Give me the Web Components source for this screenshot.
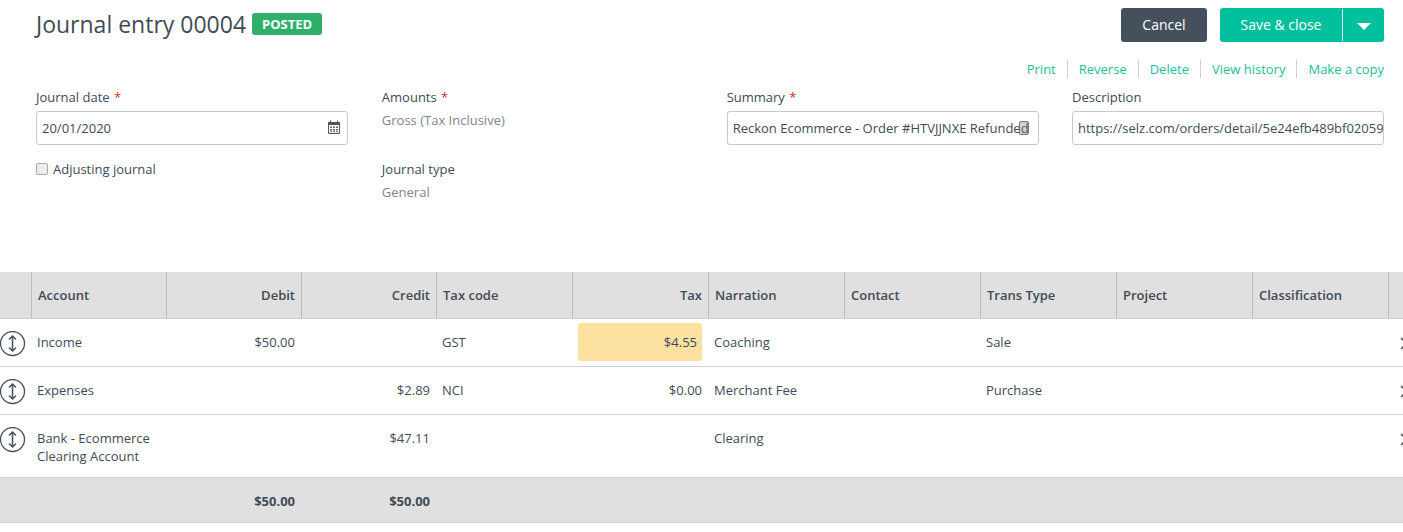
<!DOCTYPE html>
<html>
<head>
<meta charset="utf-8">
<title>Journal entry</title>
<style>
  html, body { margin: 0; background: #fff; }
  body { font: 13px/18px "Open Sans", sans-serif; color: #414b56; overflow: hidden; }
</style>
</head>
<body>
<je-page>
  <je-header slot="header" title="Journal entry 00004" status="POSTED"></je-header>
  <je-links slot="links">
    <a>Print</a><a>Reverse</a><a>Delete</a><a>View history</a><a>Make a copy</a>
  </je-links>
  <je-form slot="form"></je-form>
  <je-table slot="table"></je-table>
</je-page>

<script>
(function () {
  "use strict";

  var FONT = '"Open Sans", sans-serif';

  class JePage extends HTMLElement {
    constructor() {
      super();
      this.attachShadow({ mode: "open" }).innerHTML = `
        <style>
          :host { display: block; width: 1403px; height: 532px; overflow: hidden; }
          .top { padding: 8px 19px 0 36px; }
        </style>
        <div class="top">
          <slot name="header"></slot>
          <slot name="links"></slot>
          <slot name="form"></slot>
        </div>
        <slot name="table"></slot>`;
    }
  }
  customElements.define("je-page", JePage);

  class JeHeader extends HTMLElement {
    constructor() {
      super();
      var title = this.getAttribute("title");
      var status = this.getAttribute("status");
      this.removeAttribute("title");
      this.attachShadow({ mode: "open" }).innerHTML = `
        <style>
          :host { display: flex; justify-content: space-between; align-items: flex-start; height: 34px; font-family: ${FONT}; }
          .left { display: flex; align-items: flex-start; }
          h1 { margin: 0; font-size: 23px; line-height: 33px; font-weight: 400; color: #414b56; }
          .badge { margin: 5px 0 0 6px; height: 22px; padding: 0 10px; border-radius: 3px; background: #2fb06a; color: #fff; font-size: 13px; font-weight: 700; line-height: 22px; }
          .btns { display: flex; gap: 13px; }
          button { font: 14px/34px ${FONT}; height: 34px; border: 0; padding: 0; color: #fff; border-radius: 3px; }
          .cancel { width: 86px; background: #46505c; }
          .save { display: flex; width: 164px; background: #00c09d; }
          .save span { display: block; }
          .save .lbl { width: 122px; border-right: 1px solid #e6f8f5; height: 32px; line-height: 32px; margin-top: 1px; }
          .save .arr { flex: 1; display: flex; align-items: center; justify-content: center; padding-top: 2px; }
        </style>
        <div class="left"><h1>${title}</h1><span class="badge">${status}</span></div>
        <div class="btns">
          <button class="cancel">Cancel</button>
          <button class="save"><span class="lbl">Save &amp; close</span><span class="arr">
            <svg width="14" height="7" viewBox="0 0 14 7"><path d="M0 0h14L7 7z" fill="#fff"/></svg>
          </span></button>
        </div>`;
    }
  }
  customElements.define("je-header", JeHeader);

  class JeLinks extends HTMLElement {
    constructor() {
      super();
      this.attachShadow({ mode: "open" }).innerHTML = `
        <style>
          :host { display: flex; justify-content: flex-end; margin-top: 18px; height: 18px; font-family: ${FONT}; font-size: 13px; line-height: 18px; color: #1dbd9f; }
          ::slotted(a) { padding: 0 11px; border-left: 1px solid #cfcfcf; }
          ::slotted(a:first-child) { border-left: 0; }
          ::slotted(a:last-child) { padding-right: 0; }
        </style>
        <slot></slot>`;
    }
  }
  customElements.define("je-links", JeLinks);

  class JeField extends HTMLElement {
    constructor() {
      super();
      var label = this.getAttribute("label");
      var req = this.hasAttribute("required") ? '<i>*</i>' : "";
      this.attachShadow({ mode: "open" }).innerHTML = `
        <style>
          :host { display: block; font-family: ${FONT}; font-size: 13px; line-height: 18px; }
          .label { height: 23px; color: #414b56; }
          i { font-style: normal; color: #d8232a; margin-left: 1px; }
        </style>
        <div class="label">${label} ${req}</div>
        <slot></slot>`;
    }
  }
  customElements.define("je-field", JeField);

  class JeInput extends HTMLElement {
    constructor() {
      super();
      var value = this.getAttribute("value");
      this.attachShadow({ mode: "open" }).innerHTML = `
        <style>
          :host { display: block; position: relative; height: 34px; box-sizing: border-box; border: 1px solid #c9c9c9; border-radius: 3px; background: #fff; font-family: ${FONT}; font-size: 13px; overflow: hidden; }
          .text { padding: 0 0 0 5px; line-height: 32px; white-space: nowrap; color: #414b56; }
          ::slotted(svg) { position: absolute; top: 8px; right: 6px; }
        </style>
        <div class="text">${value}</div>
        <slot></slot>`;
    }
  }
  customElements.define("je-input", JeInput);

  class JeCheckbox extends HTMLElement {
    constructor() {
      super();
      this.attachShadow({ mode: "open" }).innerHTML = `
        <style>
          :host { display: flex; align-items: center; gap: 5px; font-family: ${FONT}; font-size: 13px; line-height: 18px; color: #414b56; }
          .box { width: 10px; height: 10px; border: 1px solid #a8a8a8; border-radius: 2px; background: #ededed; }
        </style>
        <span class="box"></span><slot></slot>`;
    }
  }
  customElements.define("je-checkbox", JeCheckbox);

  class JeForm extends HTMLElement {
    constructor() {
      super();
      this.attachShadow({ mode: "open" }).innerHTML = `
        <style>
          :host { display: grid; grid-template-columns: repeat(4, 312px); column-gap: 33.33px; margin-top: 10px; height: 184px; align-content: start; }
          .col { display: flex; flex-direction: column; }
          .amounts { padding-left: .5px; }
          .check { margin-top: 15px; }
          .second { margin-top: 31px; }
          .value { font: 13px/18px ${FONT}; color: #7d858d; height: 18px; }
          .mark { position: absolute; left: 291px; top: 9px; width: 8px; height: 12px; border: 1px solid #777; border-radius: 2px; background: rgba(120,120,120,.35); }
        </style>
        <div class="col">
          <je-field label="Journal date" required>
            <je-input value="20/01/2020">
              <svg width="14" height="14" viewBox="0 0 14 14" fill="none">
                <path d="M1.500 2.500h11v11h-11z" stroke="#555"/>
                <path d="M1 2h12v3H1z" fill="#555"/>
                <path d="M3.500 0.500v2M10.500 0.500v2" stroke="#555"/>
                <path d="M3 6.500h2V8H3zM6 6.500h2V8H6zM9 6.500h2V8H9zM3 9h2v1.500H3zM6 9h2v1.500H6zM9 9h2v1.500H9zM3 11.200h2v1H3zM6 11.200h2v1H6zM9 11.200h2v1H9z" fill="#666"/>
              </svg>
            </je-input>
          </je-field>
          <je-checkbox class="check">Adjusting journal</je-checkbox>
        </div>
        <div class="col amounts">
          <je-field label="Amounts" required><div class="value">Gross (Tax Inclusive)</div></je-field>
          <je-field class="second" label="Journal type"><div class="value">General</div></je-field>
        </div>
        <div class="col">
          <je-field label="Summary" required>
            <je-input value="Reckon Ecommerce - Order #HTVJJNXE Refunded"><span class="mark"></span></je-input>
          </je-field>
        </div>
        <div class="col">
          <je-field label="Description">
            <je-input value="https://selz.com/orders/detail/5e24efb489bf02059"></je-input>
          </je-field>
        </div>`;
    }
  }
  customElements.define("je-form", JeForm);

  var HEAD = [
    ["", ""], ["Account", ""], ["Debit", "r"], ["Credit", "r"], ["Tax code", ""], ["Tax", "r"],
    ["Narration", ""], ["Contact", ""], ["Trans Type", ""], ["Project", ""], ["Classification", ""], ["", ""]
  ];
  var ROWS = [
    ["Income", "$50.00", "", "GST", "$4.55", "Coaching", "", "Sale"],
    ["Expenses", "", "$2.89", "NCI", "$0.00", "Merchant Fee", "", "Purchase"],
    ["Bank - Ecommerce Clearing Account", "", "$47.11", "", "", "Clearing", "", ""]
  ];
  var COLS = "32px 135px 135px 135px 136px 136px 136px 136px 136px 136px 136px 40px";

  var MOVE = `<svg width="26" height="26" viewBox="0 0 26 26" fill="none" stroke="#46505c">
      <circle cx="12.500" cy="12.500" r="12" stroke-width="1.300"/>
      <path d="M12.500 5v15M9 8.500l3.500-3.500 3.500 3.500M9 16.500l3.500 3.500 3.500-3.500" stroke-width="1.500"/>
    </svg>`;
  var CLOSE = `<svg width="13" height="13" viewBox="0 0 13 13" fill="none" stroke="#46505c" stroke-width="1.500">
      <path d="M1 1l11 11M12 1L1 12"/></svg>`;

  class JeTable extends HTMLElement {
    constructor() {
      super();
      var head = HEAD.map(function (h) {
        return `<div class="th ${h[1]}">${h[0]}</div>`;
      }).join("");
      var rows = ROWS.map(function (r, n) {
        var cls = ["acc", "r", "r", "", "r", "", "", "", "", ""];
        var cells = r.concat(["", ""]).map(function (c, i) {
          if (c === "$4.55") return `<div class="td r"><span class="warn">${c}</span></div>`;
          return `<div class="td ${cls[i]}">${c}</div>`;
        }).join("");
        return `<div class="row ${n === 2 ? "tall" : ""}"><div class="move">${MOVE}</div>${cells}<div class="x">${CLOSE}</div></div>`;
      }).join("");
      this.attachShadow({ mode: "open" }).innerHTML = `
        <style>
          :host { display: block; font-family: ${FONT}; font-size: 13px; line-height: 18px; color: #414b56; overflow: hidden; }
          .head, .row, .foot { display: grid; grid-template-columns: ${COLS}; width: 1443px; box-sizing: border-box; }
          .head { height: 47px; background: #e0e0e0; border-bottom: 1px solid #cfcfcf; }
          .th { padding: 14px 6px 0; font-weight: 600; color: #414b56; border-right: 1px solid #bdbdbd; box-sizing: border-box; }
          .r { text-align: right; }
          .row { height: 48px; border-bottom: 1px solid #d2d2d2; }
          .row.tall { height: 63px; }
          .move { padding-top: 12px; }
          .td { padding: 14px 7px 0 5px; color: #414b56; box-sizing: border-box; }
          .td.acc { padding-right: 10px; }
          .warn { display: block; margin-top: -10px; height: 38px; line-height: 38px; padding-right: 5px; background: #fce1a0; border-radius: 3px; }
          .x { padding: 17px 0 0 11px; }
          .foot { height: 45px; background: #e0e0e0; border-bottom: 1px solid #d2d2d2; }
          .foot div { padding: 14px 7px 0 0; font-weight: 700; text-align: right; box-sizing: border-box; }
        </style>
        <div class="head">${head}</div>
        ${rows}
        <div class="foot"><div></div><div></div><div>$50.00</div><div>$50.00</div></div>`;
    }
  }
  customElements.define("je-table", JeTable);
})();
</script>
</body>
</html>
